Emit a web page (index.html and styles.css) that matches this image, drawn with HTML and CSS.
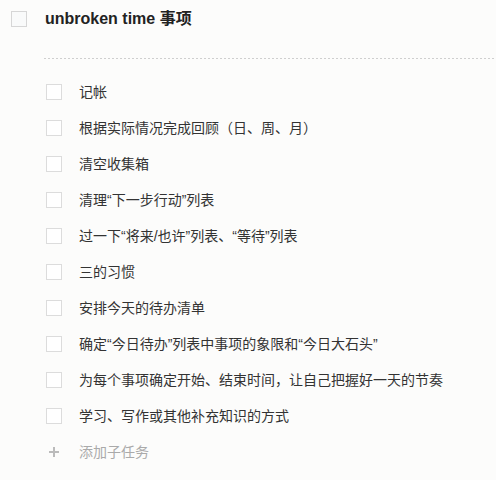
FILE: index.html
```html
<!DOCTYPE html>
<html lang="zh">
<head>
<meta charset="utf-8">
<link rel="stylesheet" href="styles.css">
</head>
<body>
<div class="task">
  <div class="task-head">
    <span class="box box-main"></span>
    <h1 class="title">unbroken time 事项</h1>
  </div>
  <div class="divider"></div>
  <ul class="subtasks">
    <li class="row"><span class="box"></span><span class="label">记帐</span></li>
    <li class="row"><span class="box"></span><span class="label">根据实际情况完成回顾（日、周、月）</span></li>
    <li class="row"><span class="box"></span><span class="label">清空收集箱</span></li>
    <li class="row"><span class="box"></span><span class="label">清理“下一步行动”列表</span></li>
    <li class="row"><span class="box"></span><span class="label">过一下“将来/也许”列表、“等待”列表</span></li>
    <li class="row"><span class="box"></span><span class="label">三的习惯</span></li>
    <li class="row"><span class="box"></span><span class="label">安排今天的待办清单</span></li>
    <li class="row"><span class="box"></span><span class="label">确定“今日待办”列表中事项的象限和“今日大石头”</span></li>
    <li class="row"><span class="box"></span><span class="label">为每个事项确定开始、结束时间，让自己把握好一天的节奏</span></li>
    <li class="row"><span class="box"></span><span class="label">学习、写作或其他补充知识的方式</span></li>
    <li class="row add"><span class="plus"></span><span class="label">添加子任务</span></li>
  </ul>
</div>
</body>
</html>
```

FILE: styles.css
```css
html, body {
  margin: 0;
  padding: 0;
  background: #fcfcfb;
}
body {
  font-family: "Liberation Sans", "Noto Sans CJK SC", sans-serif;
  color: #333;
  width: 496px;
  height: 480px;
  overflow: hidden;
}
.task-head {
  display: flex;
  align-items: center;
  padding: 9px 0 0 11px;
  height: 20px;
}
.box {
  box-sizing: border-box;
  width: 16px;
  height: 16px;
  border: 1px solid #dcdcdc;
  background: #fff;
  flex: none;
}
.box-main {
  border: 1.5px solid #d6d6d6;
  background: #f9fafa;
}
.title {
  margin: 0 0 0 18px;
  font-size: 16px;
  font-weight: bold;
  line-height: 20px;
  color: #222;
}
.divider {
  margin: 29px 0 0 44px;
  height: 1px;
  background-image: linear-gradient(to right, #cfcfcf 50%, transparent 50%);
  background-size: 4px 1px;
}
.subtasks {
  list-style: none;
  margin: 0;
  padding: 15px 0 0 46px;
}
.row {
  display: flex;
  align-items: center;
  height: 36px;
}
.label {
  margin-left: 17px;
  font-size: 14px;
  line-height: 20px;
  color: #333;
  white-space: nowrap;
}
.add .label {
  color: #aaa;
}
.plus {
  position: relative;
  width: 16px;
  height: 16px;
  flex: none;
}
.plus::before, .plus::after {
  content: "";
  position: absolute;
  background: #bbb;
}
.plus::before {
  left: 3px;
  top: 7px;
  width: 10px;
  height: 2px;
}
.plus::after {
  left: 7px;
  top: 3px;
  width: 2px;
  height: 10px;
}
```
